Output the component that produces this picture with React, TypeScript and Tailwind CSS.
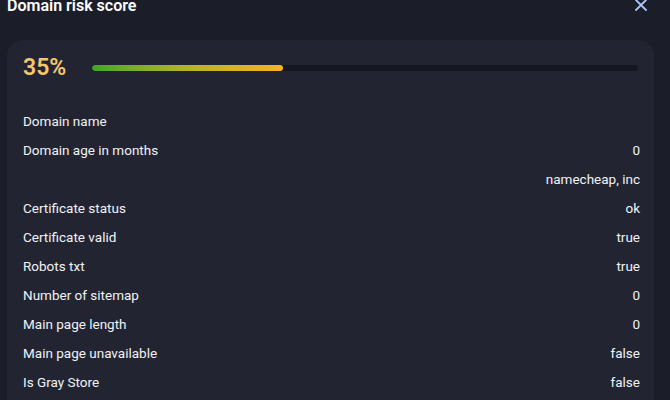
import React from "react";

const rows: [string, string][] = [
  ["Domain name", ""],
  ["Domain age in months", "0"],
  ["", "namecheap, inc"],
  ["Certificate status", "ok"],
  ["Certificate valid", "true"],
  ["Robots txt", "true"],
  ["Number of sitemap", "0"],
  ["Main page length", "0"],
  ["Main page unavailable", "false"],
  ["Is Gray Store", "false"],
];

export default function App() {
  const score = 35;
  return (
    <div className="h-[400px] w-[670px] overflow-hidden bg-[#1b1e29] text-[#f0f2f6] font-['Roboto',sans-serif]">
      {/* Header */}
      <div className="flex items-center justify-between pl-[7px] pr-[22px] mt-[-6px] h-6">
        <h2 className="text-[16px] leading-6 font-semibold text-white">Domain risk score</h2>
        <button className="text-[#a9c6f5] mt-[-3px]">
          <svg width="14" height="14" viewBox="0 0 14 14" fill="none" stroke="currentColor" strokeWidth="1.8" strokeLinecap="round">
            <path d="M2 2l10 10M12 2L2 12" />
          </svg>
        </button>
      </div>

      {/* Card */}
      <div className="mt-[22px] ml-[7px] w-[647px] rounded-2xl bg-[#222531] pl-4 pr-[14px] pt-3 pb-4">
        <div className="flex items-center gap-[26px] h-8">
          <span className="text-[23px] leading-8 font-semibold text-[#f5c76c]">{score}%</span>
          <div className="flex-1 h-[6px] rounded-full bg-[#161821] overflow-hidden mr-[2px]">
            <div
              className="h-full rounded-full bg-gradient-to-r from-[#39a72a] via-[#b5b425] to-[#f7b224]"
              style={{ width: `${score}%` }}
            />
          </div>
        </div>

        <div className="mt-[23px] flex flex-col">
          {rows.map(([label, value], i) => (
            <div key={i} className="flex h-[29px] items-center justify-between text-[13.5px]">
              <span>{label}</span>
              <span>{value}</span>
            </div>
          ))}
        </div>
      </div>
    </div>
  );
}
